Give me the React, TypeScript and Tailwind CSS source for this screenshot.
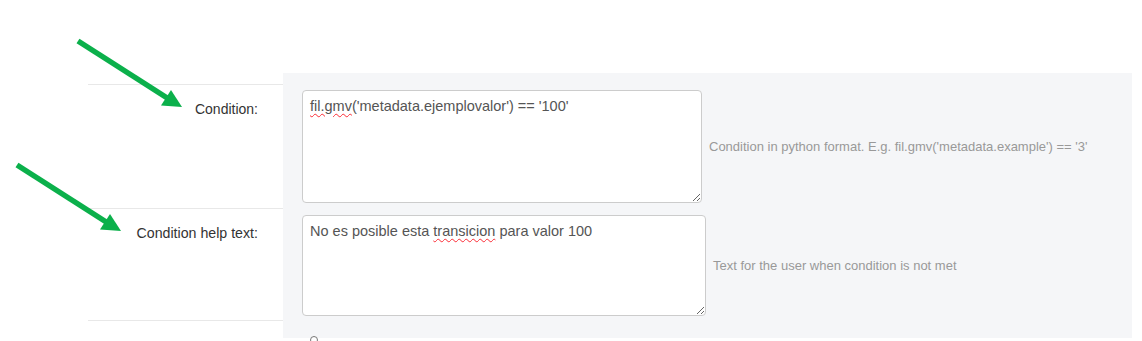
import React from "react";

function Arrow({ x, y }: { x: number; y: number }) {
  // tail at (x, y), tip at (x + 103, y + 66)
  return (
    <g transform={`translate(${x} ${y})`}>
      <line x1={0} y1={0} x2={90} y2={57.5} stroke="#0bb04b" strokeWidth={5.5} />
      <polygon points="104,66 83,64.5 93,49" fill="#0bb04b" />
    </g>
  );
}

function Misspelled({ children }: { children: React.ReactNode }) {
  return <span className="underline decoration-wavy decoration-red-500 decoration-1 underline-offset-2">{children}</span>;
}

export default function App() {
  return (
    <div className="relative w-[1142px] h-[341px] bg-white overflow-hidden text-[14px]" style={{ fontFamily: '"Liberation Sans", Arial, sans-serif' }}>
      <div className="flex pt-[73px]">
        {/* labels column */}
        <div className="w-[283px] pt-[11px] pl-[88px]">
          <div className="h-[124px] border-t border-[#e8e8e8] flex justify-end pr-[25px] pt-[14px] text-[#333]">
            Condition:
          </div>
          <div className="h-[113px] border-t border-b border-[#e8e8e8] flex justify-end pr-[25px] pt-[14px] text-[#333] text-[14.2px]">
            Condition help text:
          </div>
        </div>

        {/* fields panel */}
        <div className="w-[849px] h-[265px] bg-[#f5f6f8] pl-[19px] pt-[17px] flex flex-col gap-[12px]">
          <div className="flex items-center gap-[7px]">
            <div className="w-[400px] h-[113px] bg-white border border-[#ccc] rounded-[4px] px-[7px] pt-[5px] text-[#555] text-[14.5px] resize overflow-auto">
              <Misspelled>fil.gmv</Misspelled>('metadata.ejemplovalor') == '100'
            </div>
            <span className="text-[13px] text-[#999]">Condition in python format. E.g. fil.gmv('metadata.example') == '3'</span>
          </div>
          <div className="flex items-center gap-[7px]">
            <div className="w-[404px] h-[101px] bg-white border border-[#ccc] rounded-[4px] px-[7px] pt-[5px] text-[#555] text-[14.5px] resize overflow-auto">
              No es posible esta <Misspelled>transicion</Misspelled> para valor 100
            </div>
            <span className="text-[13px] text-[#999]">Text for the user when condition is not met</span>
          </div>
          <div className="pl-[8px] pt-[8px]">
            <div className="w-[8px] h-[8px] rounded-full border border-[#777] bg-white" />
          </div>
        </div>
      </div>

      <svg className="absolute inset-0 pointer-events-none" width={1142} height={341}>
        <Arrow x={78} y={41} />
        <Arrow x={17} y={165} />
      </svg>
    </div>
  );
}
